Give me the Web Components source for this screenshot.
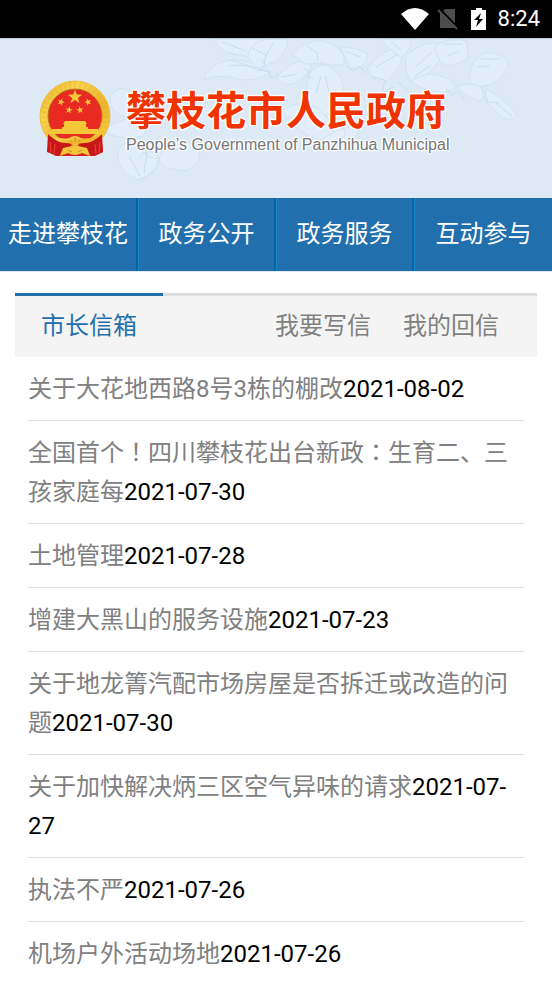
<!DOCTYPE html>
<html lang="zh-CN">
<head>
<meta charset="utf-8">
<meta name="viewport" content="width=device-width, initial-scale=1">
<title>攀枝花市人民政府</title>
<style>
    body {
        margin: 0;
        background: #fff;
        color: #000;
        font-family: Roboto, "Noto Sans CJK SC", sans-serif;
        font-size: 24px;
        line-height: 39px;
    }

    /* centred full-width punctuation */
    .mark {
        font-family: Roboto, "Noto Sans CJK TC", sans-serif;
    }
</style>
</head>
<body>
<status-bar>8:24</status-bar>
<site-header>
    攀枝花市人民政府
    <span slot="english">People’s Government of Panzhihua Municipal</span>
</site-header>
<main-nav>
    <nav-item href="#about">走进攀枝花</nav-item>
    <nav-item href="#open">政务公开</nav-item>
    <nav-item href="#service">政务服务</nav-item>
    <nav-item href="#interact">互动参与</nav-item>
</main-nav>
<mail-box>
    <mail-tab slot="current" href="#mailbox" active>市长信箱</mail-tab>
    <mail-tab slot="links" href="#write">我要写信</mail-tab>
    <mail-tab slot="links" href="#replies">我的回信</mail-tab>
    <mail-item date="2021-08-02">关于大花地西路8号3栋的棚改</mail-item>
    <mail-item date="2021-07-30">全国首个<span class="mark" lang="zh-TW">！</span>四川攀枝花出台新政<span class="mark" lang="zh-TW">：</span>生育二、三孩家庭每</mail-item>
    <mail-item date="2021-07-28">土地管理</mail-item>
    <mail-item date="2021-07-23">增建大黑山的服务设施</mail-item>
    <mail-item date="2021-07-30">关于地龙箐汽配市场房屋是否拆迁或改造的问题</mail-item>
    <mail-item date="2021-07-27">关于加快解决炳三区空气异味的请求</mail-item>
    <mail-item date="2021-07-26">执法不严</mail-item>
    <mail-item date="2021-07-26">机场户外活动场地</mail-item>
</mail-box>

<script>
class BaseElement extends HTMLElement {
    connectedCallback() {
        if (!this.shadowRoot) {
            this.attachShadow({ mode: 'open' });
            this.shadowRoot.innerHTML = this.render();
        }
    }
}

class StatusBar extends BaseElement {
    render() {
        return `
            <style>
                :host {
                    display: flex;
                    align-items: center;
                    justify-content: flex-end;
                    gap: 8px;
                    height: 38px;
                    padding-right: 12px;
                    background: #000;
                    color: #fff;
                    font-size: 22px;
                    line-height: 38px;
                }
                svg { display: block; }
            </style>
            <svg width="28" height="22" viewBox="0 0 28 22"><path fill="#fff" d="M0 6Q14-6 28 6L14 22Z"/></svg>
            <svg width="22" height="22" viewBox="0 0 22 22">
                <path fill="#4d4d4d" d="M8 1H18V20H3V6Z"/>
                <path stroke="#000" stroke-width="2" d="M2 0L22 21"/>
                <path stroke="#4d4d4d" stroke-width="2" d="M1 2L20 21"/>
            </svg>
            <svg width="23" height="22" viewBox="0 0 23 22">
                <path fill="#fff" d="M9 0H15V2H19V22H4V2H9Z"/>
                <path fill="#000" d="M14 5L7 12H11L9 19L16 11H12Z"/>
            </svg>
            <span><slot></slot></span>
        `;
    }
}
customElements.define('status-bar', StatusBar);

class NationalEmblem extends BaseElement {
    render() {
        const star = '0,-10 2.4,-3.2 9.5,-3.1 3.8,1.2 5.9,8.1 0,4 -5.9,8.1 -3.8,1.2 -9.5,-3.1 -2.4,-3.2';
        return `
            <style>
                :host { display: block; }
                svg { display: block; }
            </style>
            <svg width="74" height="78" viewBox="0 0 74 78" role="img" aria-label="国徽">
                <defs>
                    <linearGradient id="gold" x2="1" y2="1">
                        <stop offset="0" stop-color="#e9ab20"/>
                        <stop offset=".3" stop-color="#f9d552"/>
                        <stop offset=".6" stop-color="#eeb32a"/>
                        <stop offset="1" stop-color="#fbd64b"/>
                    </linearGradient>
                </defs>
                <circle cx="37" cy="36" r="35" fill="url(#gold)" stroke="#f0bc3a"/>
                <circle cx="37" cy="36" r="31" fill="none" stroke="#dca022" stroke-width="6" stroke-dasharray="2 3" opacity=".2"/>
                <circle cx="37" cy="36" r="27" fill="#e92a23" stroke="#b47a17"/>
                <g fill="#f5c83a">
                    <polygon points="${star}" transform="translate(37 17) scale(.75)"/>
                    <polygon points="${star}" transform="translate(23 22) rotate(20) scale(.38)"/>
                    <polygon points="${star}" transform="translate(50 22) rotate(-20) scale(.38)"/>
                    <polygon points="${star}" transform="translate(31 30) rotate(10) scale(.38)"/>
                    <polygon points="${star}" transform="translate(42 30) rotate(-10) scale(.38)"/>
                    <path d="M27 41H47L49 44H48V47H50V49H60L62 54H12L14 49H24V47H26V44H25Z"/>
                </g>
                <path fill="#d5211d" d="M11 55C21 66 53 66 63 55L65 72L57 76H18L10 72Z"/>
                <path fill="url(#gold)" d="M12 54Q22 60 31 58Q37 54 43 58Q52 60 62 54Q56 63 46 64Q37 67 28 64Q18 63 12 54Z"/>
                <path fill="#c71718" d="M10 54C19 65 28 62 34 64C29 70 23 68 20 76L9 72ZM64 54C55 65 46 62 40 64C45 70 51 68 54 76L65 72Z"/>
                <path fill="#f4c63b" d="M25 68L34 66Q37 64 40 66L49 68L52 76L44 73Q37 77 30 73L22 76Z"/>
                <path fill="none" stroke="#c98e20" d="M32 60L34 62M37 57V62M42 60L40 62M30 70L34 72M44 70L40 72"/>
                <path fill="none" stroke="#f04436" d="M12 62L13 73M17 64L16 74M62 62L61 73M57 64L58 74"/>
            </svg>
        `;
    }
}
customElements.define('national-emblem', NationalEmblem);

class SiteHeader extends BaseElement {
    render() {
        return `
            <style>
                :host {
                    display: grid;
                    height: 159px;
                    border-top: 1px solid #b6c2cf;
                    background: #ddeaf6;
                    overflow: hidden;
                }
                .flowers, .brand { grid-area: 1 / 1; }
                .brand {
                    display: flex;
                    align-items: center;
                    align-self: center;
                    gap: 14px;
                    padding-left: 38px;
                    z-index: 1;
                }
                .names {
                    text-shadow: 1px 1px 1px #fff, -1px -1px 1px #fff, 1px -1px 1px #fff, -1px 1px 1px #fff, 0 0 3px #fff;
                    white-space: nowrap;
                }
                h1 {
                    margin: 0;
                    color: #f03300;
                    font: 700 40px/52px "Noto Sans CJK SC", sans-serif;
                }
                p {
                    margin: 0;
                    color: #777;
                    font: 16px/22px "Liberation Sans", Arial, sans-serif;
                }
            </style>
            <svg class="flowers" width="552" height="159" viewBox="0 0 552 159" aria-hidden="true">
                <g fill="#e1eef9" stroke="#d1e2f1" stroke-width="1">
                    <path d="M215 0Q217 11 230 14L253 19Q265 26 273 17Q283 7 279 0Z"/>
                    <path d="M204 41Q207 25 230 21Q257 21 271 33Q255 44 238 40Q216 34 204 41ZM230 21Q250 27 271 33"/>
                    <path d="M248 14Q253 2 267 0H288Q286 17 274 23L260 29Q248 24 248 14Z"/>
                    <path d="M277 39Q294 16 311 26Q314 31 303 39Q287 52 277 39Z"/>
                    <path d="M292 15Q305 0 323 2Q347 9 344 25Q332 28 323 24L305 25Z"/>
                    <path d="M310 34Q320 21 333 29Q348 43 342 64Q328 84 312 72Q303 50 310 34Z"/>
                    <path d="M340 8Q358 8 368 15Q365 32 350 29Z"/>
                    <path d="M367 30Q385 6 403 9Q405 24 390 39Q379 50 367 30Z"/>
                    <path d="M382 0H411Q411 13 401 18Q389 12 382 0Z"/>
                    <path d="M406 17Q424 0 441 5Q446 15 435 27Q425 40 410 42Q404 29 406 17Z"/>
                    <path d="M410 42Q428 31 444 38Q460 44 452 52Q430 57 410 42Z"/>
                    <path d="M434 7Q449-2 467 2L468 19Q450 32 440 23Z"/>
                    <path d="M469 39Q472 15 489 13Q510 17 508 27Q500 46 483 47Q471 50 469 39Z"/>
                    <path d="M457 47Q471 43 481 48Q487 57 480 62Q463 57 457 47ZM482 48Q503 57 517 76Q510 87 498 74Q484 66 482 48Z"/>
                    <path d="M110 58Q119 43 132 54Q140 65 127 78Q109 75 110 58ZM104 93Q111 82 133 79Q150 86 145 96Q124 103 104 93Z"/>
                    <path d="M118 112Q122 101 135 105Q145 120 160 120Q154 137 138 141Q116 132 118 112ZM138 120Q149 105 159 119Q158 137 138 141"/>
                    <path d="M159 119Q168 98 180 101Q201 104 200 119Q190 137 173 130Q161 130 159 119Z"/>
                    <path d="M282 72Q298 59 318 69Q331 85 344 91Q349 98 336 102Q304 104 282 72ZM318 104Q336 88 356 87Q363 97 344 106Z"/>
                </g>
                <g fill="none" stroke="#c9dded" stroke-width="1">
                    <path d="M222 3L246 12M229 27Q248 24 260 32M252 9L266 16L264 25M274 3L266 17M281 38L297 35M306 6L317 14L318 22"/>
                    <path d="M321 37L316 54M325 36L330 57M345 12L360 18M376 28L398 15M372 38L385 41L382 54L393 48M391 3L401 11M398 43L409 53"/>
                    <path d="M416 28L432 13M414 38L431 26M443 5L462 5M447 17L459 12M481 20L500 20M477 28L490 27M485 51L487 63L499 64M496 64L512 77"/>
                    <path d="M261 20l4 5l-5 6l9 2l2 6l8-3M304 29l5 3l-2 5l7 3M346 27l8 5l5-5l8 8M445 48l7 8l6-4l6 9M129 117L140 137M147 113L144 134M169 110L185 112"/>
                </g>
            </svg>
            <div class="brand">
                <national-emblem></national-emblem>
                <div class="names">
                    <h1><slot></slot></h1>
                    <p><slot name="english"></slot></p>
                </div>
            </div>
        `;
    }
}
customElements.define('site-header', SiteHeader);

class MainNav extends BaseElement {
    render() {
        return `
            <style>
                :host { display: block; }
                nav {
                    display: grid;
                    grid-template-columns: repeat(4, 1fr);
                    background: #226fad;
                    border-bottom: 1px solid #ddeaf6;
                }
            </style>
            <nav><slot></slot></nav>
        `;
    }
}
customElements.define('main-nav', MainNav);

class NavItem extends BaseElement {
    render() {
        return `
            <style>
                :host {
                    display: block;
                    border-left: 1px solid #1687c8;
                    border-right: 2px solid #0c629c;
                }
                :host(:first-child) { border-left: 0; }
                :host(:last-child) { border-right: 0; }
                a {
                    display: block;
                    color: #fff;
                    line-height: 73px;
                    text-align: center;
                    text-decoration: none;
                    white-space: nowrap;
                }
            </style>
            <a href="${this.getAttribute('href')}"><slot></slot></a>
        `;
    }
}
customElements.define('nav-item', NavItem);

class MailBox extends BaseElement {
    render() {
        return `
            <style>
                :host {
                    display: block;
                    margin: 21px 15px 0;
                }
                .tabs {
                    display: flex;
                    justify-content: space-between;
                    background: #f4f4f4;
                }
                .links {
                    display: flex;
                    flex: 1;
                    justify-content: flex-end;
                    gap: 32px;
                    padding-right: 38px;
                    border-top: 3px solid #dedede;
                }
                .list { padding: 0 13px; }
            </style>
            <div class="tabs">
                <slot name="current"></slot>
                <div class="links"><slot name="links"></slot></div>
            </div>
            <div class="list" role="list"><slot></slot></div>
        `;
    }
}
customElements.define('mail-box', MailBox);

class MailTab extends BaseElement {
    render() {
        return `
            <style>
                :host { display: block; }
                a {
                    display: block;
                    color: #808080;
                    line-height: 61px;
                    text-decoration: none;
                }
                :host([active]) {
                    padding: 0 26px;
                    border-top: 3px solid #226fad;
                }
                :host([active]) a { color: #226fad; }
            </style>
            <a href="${this.getAttribute('href')}"><slot></slot></a>
        `;
    }
}
customElements.define('mail-tab', MailTab);

class MailItem extends BaseElement {
    connectedCallback() {
        super.connectedCallback();
        this.setAttribute('role', 'listitem');
    }

    render() {
        return `
            <style>
                :host {
                    display: block;
                    padding: 13px 0 11px;
                    border-bottom: 1px solid #dedede;
                }
                a {
                    color: #808080;
                    text-decoration: none;
                }
            </style>
            <a href="#mail"><slot></slot></a><time>${this.getAttribute('date')}</time>
        `;
    }
}
customElements.define('mail-item', MailItem);
</script>
</body>
</html>
